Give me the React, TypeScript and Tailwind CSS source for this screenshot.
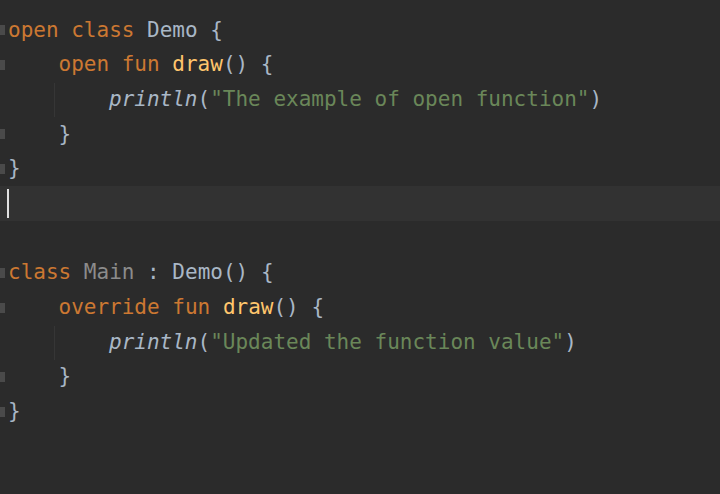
import React from "react";

const K = "text-[#cc7832]";
const T = "text-[#a9b7c6]";
const S = "text-[#6a8759]";
const F = "text-[#ffc66d]";

type Line = { content: React.ReactNode; fold?: boolean; current?: boolean };

function Indent1() {
  return <span className="inline-block w-[50.5px]" />;
}
function Indent2() {
  return (
    <>
      <span className="inline-block w-[46px]" />
      <span className="inline-block w-[55px] h-[34px] border-l border-[#363636] align-middle" />
    </>
  );
}

const lines: Line[] = [
  {
    fold: true,
    content: (
      <>
        <span className={K}>open class </span>
        <span className={T}>Demo {"{"}</span>
      </>
    ),
  },
  {
    fold: true,
    content: (
      <>
        <Indent1 />
        <span className={K}>open fun </span>
        <span className={F}>draw</span>
        <span className={T}>() {"{"}</span>
      </>
    ),
  },
  {
    content: (
      <>
        <Indent2 />
        <span className={`${T} italic`}>println</span>
        <span className={T}>(</span>
        <span className={S}>"The example of open function"</span>
        <span className={T}>)</span>
      </>
    ),
  },
  {
    fold: true,
    content: (
      <>
        <Indent1 />
        <span className={T}>{"}"}</span>
      </>
    ),
  },
  { fold: true, content: <span className={T}>{"}"}</span> },
  {
    current: true,
    content: <span className="inline-block w-[2px] h-[29px] bg-[#e0e0e0] ml-[-1px]" />,
  },
  { content: null },
  {
    fold: true,
    content: (
      <>
        <span className={K}>class </span>
        <span className="text-[#8c8c8c]">Main</span>
        <span className={T}> : Demo() {"{"}</span>
      </>
    ),
  },
  {
    fold: true,
    content: (
      <>
        <Indent1 />
        <span className={K}>override fun </span>
        <span className={F}>draw</span>
        <span className={T}>() {"{"}</span>
      </>
    ),
  },
  {
    content: (
      <>
        <Indent2 />
        <span className={`${T} italic`}>println</span>
        <span className={T}>(</span>
        <span className={S}>"Updated the function value"</span>
        <span className={T}>)</span>
      </>
    ),
  },
  {
    fold: true,
    content: (
      <>
        <Indent1 />
        <span className={T}>{"}"}</span>
      </>
    ),
  },
  { fold: true, content: <span className={T}>{"}"}</span> },
];

export default function App() {
  return (
    <div
      className="w-[720px] h-[494px] bg-[#2b2b2b] overflow-hidden pt-[13px] text-[21px]"
      style={{ fontFamily: '"DejaVu Sans Mono", "Liberation Mono", monospace' }}
    >
      {lines.map((l, i) => (
        <div
          key={i}
          className={`relative h-[34.7px] flex items-center pl-[8px] whitespace-pre ${
            l.current ? "bg-[#323232]" : ""
          }`}
        >
          {l.fold && (
            <span className="absolute left-0 top-1/2 -translate-y-1/2 w-[5px] h-[10px] bg-[#4a4a4a]" />
          )}
          {l.content}
        </div>
      ))}
    </div>
  );
}
